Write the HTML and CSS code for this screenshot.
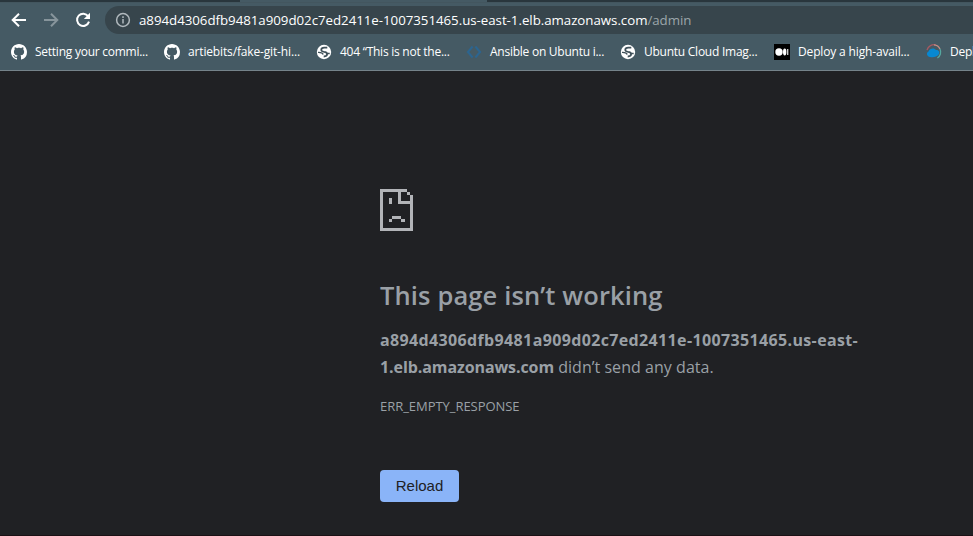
FILE: index.html
```html
<!DOCTYPE html>
<html lang="en">
<head>
<meta charset="utf-8">
<title>This page isn’t working</title>
<link rel="stylesheet" href="styles.css">
</head>
<body>
<svg class="defs" width="0" height="0">
  <symbol id="github" viewBox="0 0 16 16"><path fill="#fff" d="M8 0C3.58 0 0 3.58 0 8c0 3.54 2.29 6.53 5.47 7.59.4.07.55-.17.55-.38 0-.19-.01-.82-.01-1.49-2.01.37-2.53-.49-2.69-.94-.09-.23-.48-.94-.82-1.13-.28-.15-.68-.52-.01-.53.63-.01 1.08.58 1.23.82.72 1.21 1.87.87 2.33.66.07-.52.28-.87.51-1.07-1.78-.2-3.64-.89-3.64-3.95 0-.87.31-1.59.82-2.15-.08-.2-.36-1.02.08-2.12 0 0 .67-.21 2.2.82.64-.18 1.32-.27 2-.27s1.36.09 2 .27c1.53-1.04 2.2-.82 2.2-.82.44 1.1.16 1.92.08 2.12.51.56.82 1.27.82 2.15 0 3.07-1.87 3.75-3.65 3.95.29.25.54.73.54 1.48 0 1.07-.01 1.93-.01 2.2 0 .21.15.46.55.38A8.01 8.01 0 0 0 16 8c0-4.42-3.58-8-8-8z"/></symbol>
  <symbol id="globe" viewBox="0 0 16 16"><circle cx="8" cy="8" r="7.2" fill="#fff"/><path d="M11.300 3.600H8.200C6.300 3.600 5.200 4.600 5.300 6c.1 1.500 1.500 1.700 2.900 1.900 1.700.2 2.900.7 2.900 2.200 0 1.700-1.600 2.400-3.400 2.400" fill="none" stroke="#40515a" stroke-width="1.8"/><path d="M2 8.300c2 .2 4.600.2 5.200 2.200M11 9.500h2.700" fill="none" stroke="#40515a" stroke-width="1.300"/></symbol>
</svg>
<div class="tabstrip"><div class="active-tab"></div></div>
<header class="toolbar">
  <svg class="nav back" viewBox="0 0 16 16"><path d="M15 8H2M8 1.7 1.7 8 8 14.3"/></svg>
  <svg class="nav forward" viewBox="0 0 16 16"><path d="M1 8h13M8 1.7 14.3 8 8 14.3"/></svg>
  <svg class="nav reload-icon" viewBox="0 0 16 16"><path d="M13.2 4.3A6.1 6.1 0 1 0 14 9.6"/><path class="tip" d="M15 .8v6.3H8.8z"/></svg>
  <div class="omnibox">
    <svg class="info" viewBox="0 0 16 16"><circle cx="8" cy="8" r="6.4"/><path d="M8 7v4.5M8 4.3v1.6"/></svg>
    <span class="url">a894d4306dfb9481a909d02c7ed2411e-1007351465.us-east-1.elb.amazonaws.com<span class="path">/admin</span></span>
  </div>
</header>
<nav class="bookmarks">
  <a class="b1"><svg><use href="#github"/></svg><span>Setting your commi...</span></a>
  <a class="b2"><svg><use href="#github"/></svg><span>artiebits/fake-git-hi...</span></a>
  <a class="b3"><svg><use href="#globe"/></svg><span>404 “This is not the...</span></a>
  <a class="b4"><svg viewBox="0 0 16 16"><path d="M6.600 2.500 1.900 8l4.700 5.500M9.400 2.500 14.100 8l-4.700 5.500" fill="none" stroke="#2c6590" stroke-width="2"/></svg><span>Ansible on Ubuntu i...</span></a>
  <a class="b5"><svg><use href="#globe"/></svg><span>Ubuntu Cloud Imag...</span></a>
  <a class="b6"><svg viewBox="0 0 16 16"><path d="M0 0h16v16H0z"/><g fill="#fff"><circle cx="5" cy="8" r="3.7"/><ellipse cx="10.7" cy="8" rx="1.7" ry="3.4"/><path d="M13.2 5h1.1v6h-1.1z"/></g></svg><span>Deploy a high-avail...</span></a>
  <a class="b7"><svg viewBox="0 0 16 16"><path d="M1 6A7.2 7.2 0 0 1 10 1" fill="none" stroke="#a65a62" stroke-width="1.3"/><path d="M8 .9a7 7 0 0 1 6 4.2" fill="none" stroke="#c99187" stroke-width="1.3"/><path d="M14 5a7 7 0 0 1-2.6 9" fill="none" stroke="#55a7a0" stroke-width="1.3"/><path d="M4 13C.5 12.500 0 8.500 2.500 7.500 3.500 4 8.500 3.500 10 6c3-.3 4.200 2.500 2.500 4.800C11 13 7.500 13.500 4 13z" fill="#0788d1"/></svg><span>Deploy</span></a>
</nav>
<main>
  <svg class="sad" viewBox="0 0 11 14" shape-rendering="crispEdges"><path d="M0 0h9v1H0zM0 1h1v12H0zM0 13h11v1H0zM10 2h1v11h-1zM9 1h1v1H9zM6 1h1v3H6zM6 4h4v1H6z"/><path d="M3 3h1v2H3zM4 9h3v1H4zM3 10h1v1H3zM7 10h1.330v1H7z"/></svg>
  <h1>This page isn’t working</h1>
  <p class="message"><strong class="host-a">a894d4306dfb9481a909d02c7ed2411e-1007351465.us-east-</strong><br><strong class="host-b">1.elb.amazonaws.com</strong> <span class="reason">didn’t send any data.</span></p>
  <div class="code">ERR_EMPTY_RESPONSE</div>
  <button>Reload</button>
</main>
</body>
</html>
```
FILE: styles.css
```css
* { box-sizing: border-box; }
body {
  margin: 0;
  height: 536px;
  overflow: hidden;
  display: flex;
  flex-direction: column;
  background: #202124;
  color: #9aa0a6;
  font-family: "Open Sans", "Noto Sans", sans-serif;
}
.defs { position: absolute; }
.tabstrip { height: 2px; flex: none; background: #29363d; padding-left: 240px; }
.active-tab { width: 247px; height: 2px; background: #455a64; }
.toolbar {
  height: 34px;
  flex: none;
  display: flex;
  align-items: center;
  padding: 1px 0 0 11px;
  background: #455a64;
  border-top: 1px solid #43565f;
}
.nav { width: 16px; height: 16px; margin-right: 16px; flex: none; fill: none; stroke: #fff; stroke-width: 2; }
.forward { stroke: #87959c; }
.reload-icon { margin-right: 14px; }
.reload-icon .tip { fill: #fff; stroke: none; }
.omnibox {
  flex: 1;
  height: 28px;
  display: flex;
  align-items: center;
  padding-left: 10px;
  border-radius: 14px 0 0 14px;
  background: #37454c;
  white-space: nowrap;
}
.info { width: 16px; height: 16px; margin-right: 8px; fill: none; stroke: #b0b8bd; stroke-width: 1.5; }
.url { font-size: 13.3px; line-height: 20px; color: #fff; letter-spacing: -0.035px; }
.url .path { color: #9ba5aa; }
.bookmarks {
  height: 35px;
  flex: none;
  display: flex;
  align-items: center;
  padding: 0 0 3px 11px;
  background: #455a64;
  border-bottom: 1px solid #75838a;
}
.bookmarks a { display: flex; align-items: center; flex: none; color: #fff; font-size: 12px; line-height: 18px; letter-spacing: -0.25px; white-space: nowrap; }
.bookmarks svg { width: 16px; height: 16px; margin-right: 8px; flex: none; }
.b1 { width: 153px; }
.b2 { width: 152px; }
.b3 { width: 150px; }
.b4 { width: 154px; }
.b5 { width: 154px; }
.b6 { width: 152px; }
.bookmarks .b2, .bookmarks .b6 { letter-spacing: -0.15px; }
main {
  flex: 1;
  padding: 118px 0 0 380px;
  border-bottom: 1px solid #1b1115;
}
.sad { display: block; width: 33px; height: 42px; fill: #b2b4b8; }
h1 { margin: 46px 0 0; font-size: 25.500px; font-weight: 600; line-height: 36px; letter-spacing: 0.13px; white-space: nowrap; }
.message { margin: 14px 0 0; font-size: 16px; line-height: 27px; white-space: nowrap; }
.message strong { font-weight: 700; }
.host-a { letter-spacing: 0.36px; }
.host-b { letter-spacing: -0.09px; }
.reason { letter-spacing: 0.04px; }
.code { margin-top: 14px; font-size: 13px; line-height: 22px; letter-spacing: -0.04px; }
button {
  display: block;
  margin: 53px 0 0;
  width: 79px;
  height: 32px;
  padding: 0 0 2px;
  border: 0;
  border-radius: 4px;
  background: #8ab4f8;
  color: #202124;
  font: 15px "Liberation Sans", sans-serif;
}
```
